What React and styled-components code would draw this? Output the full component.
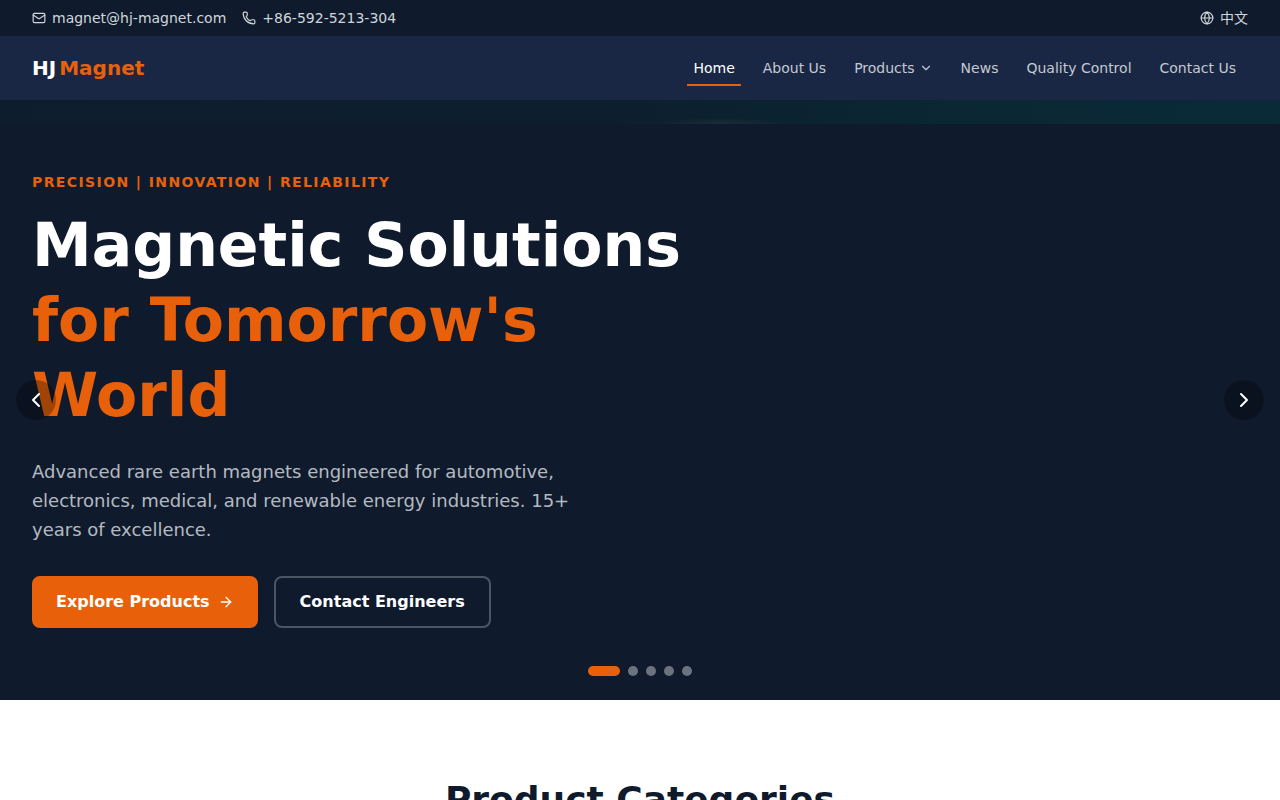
import styled, { createGlobalStyle } from "styled-components"
import { Mail, Phone, Globe, ChevronDown, ChevronLeft, ChevronRight, ArrowRight } from "lucide-react"

const GlobalStyle = createGlobalStyle`
html, body {
  margin: 0;
  padding: 0;
  background: #fff;
  font-family: "DejaVu Sans", "Noto Sans CJK SC", sans-serif;
}
* {
  box-sizing: border-box;
}
`

const TopBar = styled.div`
height: 36px;
background: #0f1b2d;
color: #d1d5db;
font-size: 14px;
line-height: 20px;
padding: 0 32px;
display: flex;
align-items: center;
justify-content: space-between;
`
const Contacts = styled.div`
display: flex;
gap: 16px;
`
const TopItem = styled.a`
display: flex;
align-items: center;
gap: 6px;
height: 20px;
color: inherit;
text-decoration: none;
`

const NavBar = styled.nav`
height: 64px;
background: #1a2744;
padding: 0 32px;
display: flex;
align-items: center;
justify-content: space-between;
`
const Logo = styled.div`
display: flex;
gap: 3px;
font-size: 20px;
font-weight: 700;
color: #fff;
`
const LogoAccent = styled.span`
color: #e8610a;
`
const NavLinks = styled.div`
display: flex;
gap: 4px;
`
const NavLink = styled.a`
position: relative;
display: flex;
align-items: center;
gap: 4px;
padding: 8px 12px;
font-size: 14px;
line-height: 20px;
color: ${(p) => (p.$active ? "#fff" : "#c4c9d2")};
${(p) =>
  p.$active &&
  `&::after {
    content: "";
    position: absolute;
    left: 6px;
    right: 6px;
    bottom: 0;
    height: 2px;
    background: #e8610a;
  }`}
`

const Hero = styled.section`
position: relative;
height: 600px;
background: #0f1b2d;
padding: 72px 32px 0;
overflow: hidden;
`
const Glow = styled.div`
position: absolute;
top: 0;
left: 0;
right: 0;
height: 24px;
background:
  radial-gradient(ellipse 70px 6px at 720px 24px, rgba(120, 110, 100, 0.14), transparent),
  linear-gradient(90deg, #0e1d2d 0%, #0d1e2e 45%, #0a2733 75%, #0a2a38 100%);
`
const Tagline = styled.p`
margin: 0 0 16px;
font-size: 14px;
line-height: 20px;
font-weight: 700;
letter-spacing: 1.4px;
color: #e8610a;
`
const Heading = styled.h1`
margin: 0 0 24px;
max-width: 672px;
font-size: 60px;
line-height: 75px;
font-weight: 700;
color: #fff;
`
const HeadingAccent = styled.span`
display: block;
color: #e8610a;
`
const Lead = styled.p`
margin: 0 0 32px;
max-width: 576px;
font-size: 18px;
line-height: 29px;
color: #d1d5db;
opacity: 0.85;
`
const Actions = styled.div`
display: flex;
gap: 16px;
`
const Button = styled.a`
height: 52px;
padding: 0 24px;
display: flex;
align-items: center;
gap: 8px;
border-radius: 8px;
font-size: 16px;
line-height: 24px;
font-weight: 700;
color: #fff;
background: ${(p) => (p.$primary ? "#e8610a" : "transparent")};
border: ${(p) => (p.$primary ? "none" : "2px solid #4b5563")};
`
const ArrowButton = styled.button`
position: absolute;
top: 280px;
${(p) => (p.$side === "left" ? "left: 16px;" : "right: 16px;")}
width: 40px;
height: 40px;
padding: 0;
display: flex;
align-items: center;
justify-content: center;
border: none;
border-radius: 50%;
color: #fff;
background: rgba(0, 0, 0, 0.3);
`
const Dots = styled.div`
position: absolute;
left: 0;
right: 0;
bottom: 24px;
display: flex;
justify-content: center;
gap: 8px;
`
const Dot = styled.span`
width: ${(p) => (p.$active ? "32px" : "10px")};
height: 10px;
border-radius: 5px;
background: ${(p) => (p.$active ? "#e8610a" : "#6b7280")};
`

const Categories = styled.section`
padding: 80px 32px 40px;
background: #fff;
text-align: center;
`
const SectionTitle = styled.h2`
margin: 0;
font-size: 36px;
line-height: 40px;
font-weight: 700;
color: #0f1b2d;
`

const links = ["About Us", "Products", "News", "Quality Control", "Contact Us"]

const App = () => {
  return (
    <>
      <GlobalStyle />
      <TopBar>
        <Contacts>
          <TopItem><Mail size={14} />magnet@hj-magnet.com</TopItem>
          <TopItem><Phone size={14} />+86-592-5213-304</TopItem>
        </Contacts>
        <TopItem><Globe size={14} />中文</TopItem>
      </TopBar>
      <NavBar>
        <Logo>HJ<LogoAccent>Magnet</LogoAccent></Logo>
        <NavLinks>
          <NavLink $active>Home</NavLink>
          {links.map((l) => (
            <NavLink key={l}>
              {l}
              {l === "Products" && <ChevronDown size={14} />}
            </NavLink>
          ))}
        </NavLinks>
      </NavBar>
      <Hero>
        <Glow />
        <Tagline>PRECISION | INNOVATION | RELIABILITY</Tagline>
        <Heading>
          Magnetic Solutions
          <HeadingAccent>for Tomorrow's World</HeadingAccent>
        </Heading>
        <Lead>
          Advanced rare earth magnets engineered for automotive, electronics, medical, and renewable energy industries. 15+ years of excellence.
        </Lead>
        <Actions>
          <Button $primary>Explore Products <ArrowRight size={16} /></Button>
          <Button>Contact Engineers</Button>
        </Actions>
        <ArrowButton $side="left"><ChevronLeft size={24} /></ArrowButton>
        <ArrowButton $side="right"><ChevronRight size={24} /></ArrowButton>
        <Dots>
          <Dot $active />
          <Dot />
          <Dot />
          <Dot />
          <Dot />
        </Dots>
      </Hero>
      <Categories>
        <SectionTitle>Product Categories</SectionTitle>
      </Categories>
    </>
  )
}

export default App
